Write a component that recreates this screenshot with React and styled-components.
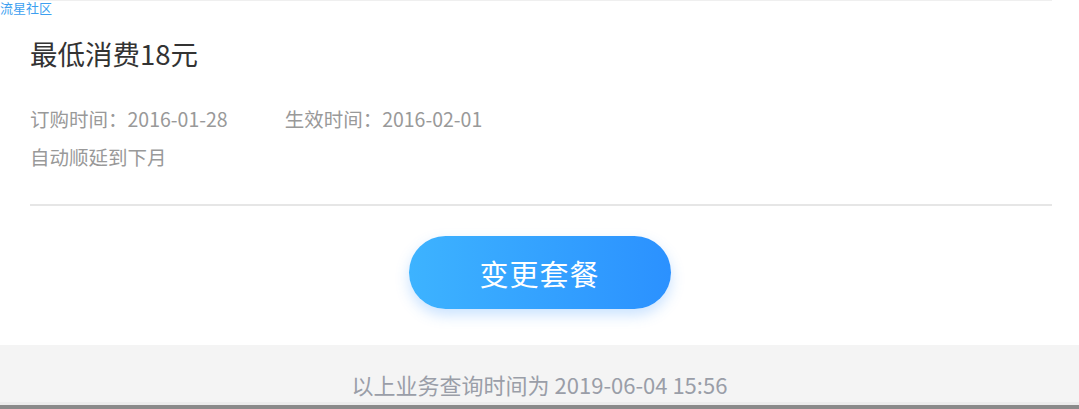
import styled, { createGlobalStyle } from "styled-components";

const GlobalStyle = createGlobalStyle`
  html, body {
    margin: 0;
    padding: 0;
    background: #fff;
  }
  body {
    font-family: "Noto Sans CJK SC", "Noto Sans", sans-serif;
    overflow: hidden;
  }
  * { box-sizing: border-box; }
`;

const plan = {
  name: "最低消费18元",
  ordered: "2016-01-28",
  effective: "2016-02-01",
  renew: "自动顺延到下月",
  queriedAt: "2019-06-04 15:56",
};

const App = () => {
  return (
    <>
      <GlobalStyle />
      <Page>
        <Watermark>流星社区</Watermark>
        <Card>
          <Title>{plan.name}</Title>
          <Info>
            <Row>
              <span>{`订购时间：${plan.ordered}`}</span>
              <span>{`生效时间：${plan.effective}`}</span>
            </Row>
            <Row>{plan.renew}</Row>
          </Info>
        </Card>
        <Actions>
          <ChangeButton>变更套餐</ChangeButton>
        </Actions>
        <Footer>{`以上业务查询时间为 ${plan.queriedAt}`}</Footer>
        <BottomBar />
      </Page>
    </>
  );
};

export default App;

const Page = styled.div`
  position: relative;
  width: 1079px;
  height: 409px;
  display: flex;
  flex-direction: column;
  background: #fff;
`;

const Watermark = styled.div`
  position: absolute;
  top: 0;
  left: 0;
  font-size: 13px;
  line-height: 16px;
  color: #3d9ff0;
  z-index: 2;
`;

const Card = styled.div`
  margin: 0 27px 0 30px;
  border-top: 1px solid #efefef;
  border-bottom: 2px solid #e6e6e6;
  padding: 34px 0 28px;
`;

const Title = styled.h1`
  margin: 0;
  font-size: 27.5px;
  line-height: 36px;
  font-weight: 400;
  color: #333;
`;

const Info = styled.div`
  margin-top: 29px;
  font-size: 19.5px;
  line-height: 38px;
  color: #999;
`;

const Row = styled.div`
  display: flex;
  gap: 57px;
`;

const Actions = styled.div`
  display: flex;
  justify-content: center;
  padding: 30px 0 36px;
`;

const ChangeButton = styled.button`
  width: 262px;
  height: 73px;
  border: none;
  border-radius: 37px;
  background: linear-gradient(90deg, #3db3ff 0%, #2b91ff 100%);
  box-shadow: 0 6px 14px rgba(60, 150, 255, 0.28);
  color: #fff;
  font-family: inherit;
  font-size: 29px;
  letter-spacing: 1px;
  cursor: pointer;
`;

const Footer = styled.div`
  height: 60px;
  background: #f4f4f4;
  border-bottom: 3px solid #ececec;
  padding-top: 24px;
  text-align: center;
  font-size: 22px;
  line-height: 30px;
  color: #9a9ea8;
`;

const BottomBar = styled.div`
  flex: 1;
  background: #8a8a8a;
`;
